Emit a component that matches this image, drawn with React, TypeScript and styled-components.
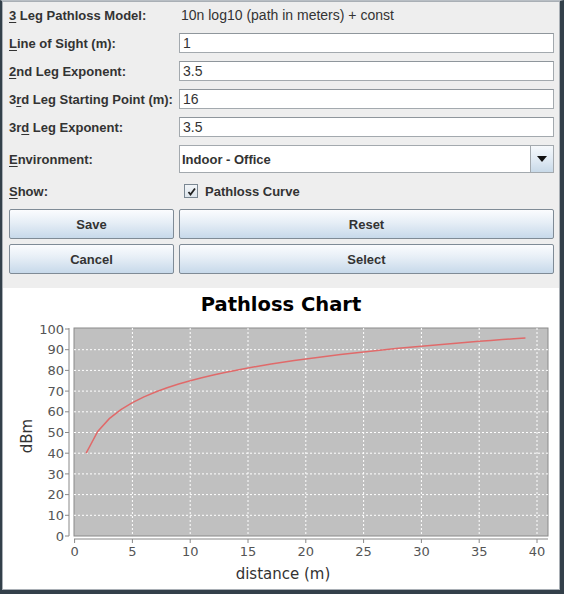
import React from "react"
import styled, { createGlobalStyle } from "styled-components"

const GlobalStyle = createGlobalStyle`
    html, body {
        margin: 0;
        padding: 0;
        background: #eeeeee;
    }
    * {
        box-sizing: border-box;
    }
`

const Frame = styled.div`
    width: 564px;
    height: 594px;
    display: flex;
    flex-direction: column;
    border-top: 1px solid #b8bec4;
    border-left: 2px solid #33404a;
    border-right: 4px solid #33404a;
    border-bottom: 4px solid #33404a;
    background: #eeeeee;
`

const Panel = styled.div`
    flex: 1;
    display: flex;
    flex-direction: column;
    border: 1px solid #a9afb5;
    font-family: "Liberation Sans", Arial, sans-serif;
    color: #333;
`

const Form = styled.div`
    display: grid;
    grid-template-columns: 170px 1fr;
    grid-template-rows: repeat(5, 20px) 28px 20px;
    row-gap: 8px;
    align-items: center;
    padding: 3px 5px 0 6px;
`

const Label = styled.label`
    font-size: 13px;
    font-weight: bold;
    white-space: nowrap;
    u {
        text-decoration: underline;
        text-underline-offset: 2px;
    }
`

const ValueText = styled.span`
    font-size: 14px;
    padding-left: 2px;
`

const TextInput = styled.input`
    height: 20px;
    width: 100%;
    border: 1px solid #a3a9ae;
    border-top-color: #8f969c;
    background: #fff;
    font-family: "Liberation Sans", Arial, sans-serif;
    font-size: 14px;
    color: #333;
    padding: 0 3px;
    outline: none;
`

const ComboRow = styled.div`
    height: 28px;
    display: flex;
    border: 1px solid #a3a9ae;
    background: #fff;
`

const ComboText = styled.div`
    flex: 1;
    display: flex;
    align-items: center;
    padding-left: 2px;
    font-size: 13px;
    font-weight: bold;
`

const ComboArrow = styled.div`
    width: 23px;
    display: flex;
    align-items: center;
    justify-content: center;
    border-left: 1px solid #a3a9ae;
    background: linear-gradient(#f6f9fc, #dde8f2 60%, #c8d9e8);
`

const Check = styled.span`
    display: inline-flex;
    align-items: center;
    gap: 7px;
    padding-left: 5px;
    font-size: 13px;
    font-weight: bold;
`

const Box = styled.span`
    width: 14px;
    height: 14px;
    display: inline-flex;
    align-items: center;
    justify-content: center;
    border: 1px solid #7a8792;
    background: linear-gradient(#f2f5f8, #dde5ec);
`

const Buttons = styled.div`
    display: grid;
    grid-template-columns: 165px 1fr;
    column-gap: 5px;
    row-gap: 5px;
    padding: 8px 5px 0 6px;
`

const Button = styled.button`
    height: 30px;
    border: 1px solid #7f8b96;
    border-radius: 2px;
    background: linear-gradient(#fbfcfe, #e6eef6 45%, #c7d9ea);
    font-family: "Liberation Sans", Arial, sans-serif;
    font-size: 13px;
    font-weight: bold;
    color: #333;
    padding: 0;
`

const ChartPanel = styled.div`
    flex: 1;
    margin-top: 14px;
    background: #fff;
    display: flex;
    flex-direction: column;
`

const ChartTitle = styled.h2`
    margin: 0;
    height: 32px;
    line-height: 34px;
    text-align: center;
    font-family: "DejaVu Sans", Verdana, sans-serif;
    font-size: 19.5px;
    font-weight: bold;
    color: #000;
`

const X0 = 71.6
const XS = 11.56
const Y0 = 216
const YS = 2.07

const xPos = (v: number) => X0 + v * XS
const yPos = (v: number) => Y0 - v * YS

const curve = Array.from({ length: 39 }, (_, i) => {
    const d = i + 1
    return [xPos(d), yPos(40 + 35 * Math.log10(d))]
})

const yTicks = [0, 10, 20, 30, 40, 50, 60, 70, 80, 90, 100]
const xTicks = [0, 5, 10, 15, 20, 25, 30, 35, 40]

const Chart = () => (
    <svg width="556" height="268" fontFamily="'DejaVu Sans', Verdana, sans-serif">
        <rect x="71" y="8" width="474" height="208" fill="#c0c0c0" stroke="#8a8a8a" strokeWidth="1" />
        {yTicks.slice(1, 10).map(v => (
            <line key={v} x1="71" x2="545" y1={yPos(v)} y2={yPos(v)} stroke="#fff" strokeDasharray="2 2" strokeWidth="1" />
        ))}
        {xTicks.slice(1).map(v => (
            <line key={v} x1={xPos(v)} x2={xPos(v)} y1="8" y2="216" stroke="#fff" strokeDasharray="2 2" strokeWidth="1" />
        ))}
        <polyline points={curve.map(p => p.join(",")).join(" ")} fill="none" stroke="#e06a6a" strokeWidth="1.5" />
        <line x1="66" x2="66" y1="8" y2="216" stroke="#888" />
        {yTicks.map(v => (
            <g key={v}>
                <line x1="62" x2="66" y1={yPos(v)} y2={yPos(v)} stroke="#888" />
                <text x="61" y={yPos(v)} dy="0.36em" textAnchor="end" fontSize="13" fill="#555">{v}</text>
            </g>
        ))}
        <line x1="71" x2="545" y1="219" y2="219" stroke="#888" />
        {xTicks.map(v => (
            <g key={v}>
                <line x1={xPos(v)} x2={xPos(v)} y1="219" y2="223" stroke="#888" />
                <text x={xPos(v)} y="236" textAnchor="middle" fontSize="13" fill="#555">{v}</text>
            </g>
        ))}
        <text x="280" y="259" textAnchor="middle" fontSize="15" fill="#333">distance (m)</text>
        <text transform="translate(29 116) rotate(-90)" textAnchor="middle" fontSize="15" fill="#333">dBm</text>
    </svg>
)

const App = () => {
    return (
        <Frame>
            <GlobalStyle />
            <Panel>
                <Form>
                    <Label><u>3</u> Leg Pathloss Model:</Label>
                    <ValueText>10n log10 (path in meters) + const</ValueText>

                    <Label><u>L</u>ine of Sight (m):</Label>
                    <TextInput defaultValue="1" />

                    <Label><u>2</u>nd Leg Exponent:</Label>
                    <TextInput defaultValue="3.5" />

                    <Label>3<u>r</u>d Leg Starting Point (m):</Label>
                    <TextInput defaultValue="16" />

                    <Label>3r<u>d</u> Leg Exponent:</Label>
                    <TextInput defaultValue="3.5" />

                    <Label><u>E</u>nvironment:</Label>
                    <ComboRow>
                        <ComboText>Indoor - Office</ComboText>
                        <ComboArrow>
                            <svg width="10" height="6"><path d="M0 0 L10 0 L5 6 Z" fill="#111" /></svg>
                        </ComboArrow>
                    </ComboRow>

                    <Label><u>S</u>how:</Label>
                    <Check>
                        <Box>
                            <svg width="9" height="9"><path d="M1.5 5 L3.5 7.5 L8 1.5" fill="none" stroke="#222" strokeWidth="1.8" /></svg>
                        </Box>
                        Pathloss Curve
                    </Check>
                </Form>
                <Buttons>
                    <Button>Save</Button>
                    <Button>Reset</Button>
                    <Button>Cancel</Button>
                    <Button>Select</Button>
                </Buttons>
                <ChartPanel>
                    <ChartTitle>Pathloss Chart</ChartTitle>
                    <Chart />
                </ChartPanel>
            </Panel>
        </Frame>
    )
}

export default App
